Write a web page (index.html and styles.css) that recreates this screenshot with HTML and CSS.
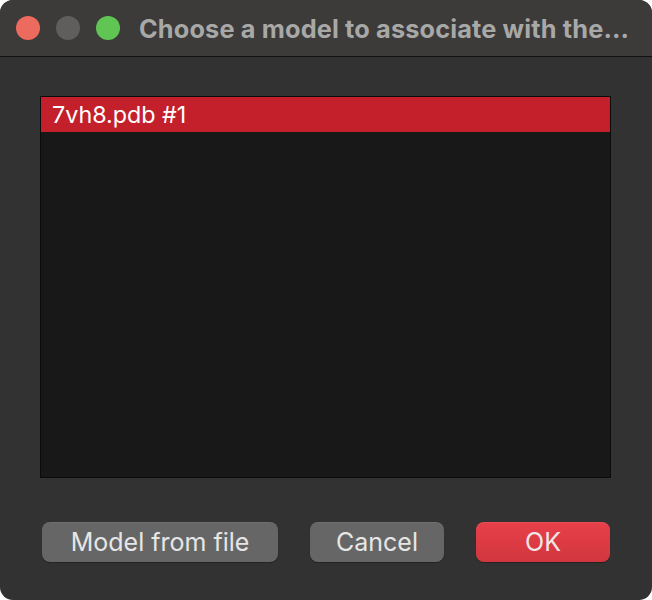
FILE: index.html
```html
<!DOCTYPE html>
<html>
<head>
<meta charset="utf-8">
<link rel="stylesheet" href="styles.css">
</head>
<body>
<div class="window">
  <div class="titlebar">
    <div class="lights">
      <span class="light red"></span>
      <span class="light gray"></span>
      <span class="light green"></span>
    </div>
    <div class="title">Choose a model to associate with the...</div>
  </div>
  <div class="content">
    <div class="list">
      <div class="row selected">7vh8.pdb #1</div>
    </div>
    <div class="buttons">
      <button class="btn wide">Model from file</button>
      <button class="btn">Cancel</button>
      <button class="btn primary">OK</button>
    </div>
  </div>
</div>
</body>
</html>
```

FILE: styles.css
```css
html, body {
  margin: 0;
  padding: 0;
  background: #ffffff;
}
body {
  font-family: Inter, "Noto Sans", "Liberation Sans", sans-serif;
}
.window {
  width: 652px;
  height: 600px;
  border-radius: 13px;
  overflow: hidden;
  background: #323232;
  display: flex;
  flex-direction: column;
}
.titlebar {
  height: 56px;
  background: #3c3b3a;
  border-bottom: 1px solid #111111;
  display: flex;
  align-items: center;
  padding-left: 16px;
  flex-shrink: 0;
}
.lights {
  display: flex;
  gap: 16px;
}
.light {
  width: 24px;
  height: 24px;
  border-radius: 50%;
  display: block;
}
.red { background: #ed6a5e; }
.gray { background: #5f5e5d; }
.green { background: #61c554; }
.title {
  margin-left: 19px;
  color: #a8a8a7;
  font-weight: 700;
  font-size: 25.3px;
  letter-spacing: 0.15px;
  white-space: nowrap;
}
.content {
  padding: 39px 41px 0 40px;
  display: flex;
  flex-direction: column;
}
.list {
  height: 380px;
  background: #181818;
  border: 1px solid #0b0b0b;
}
.row {
  height: 35px;
  line-height: 35px;
  padding-left: 11px;
  font-size: 23.3px;
  color: #ffffff;
}
.selected {
  background: #c4202c;
}
.buttons {
  margin-top: 44px;
  padding-left: 2px;
  display: flex;
  gap: 32px;
}
.btn {
  font-family: Inter, "Noto Sans", "Liberation Sans", sans-serif;
  height: 40px;
  width: 134px;
  border: none;
  border-radius: 8px;
  background: #666666;
  color: #e6e6e6;
  font-size: 25px;
  padding: 0;
  box-shadow: 0 1px 1px rgba(0,0,0,0.3), inset 0 1px 0 rgba(255,255,255,0.06);
}
.btn.wide {
  width: 236px;
}
.btn.primary {
  background: linear-gradient(#e8404a, #d1363e);
  color: #f0e6e6;
}
```
